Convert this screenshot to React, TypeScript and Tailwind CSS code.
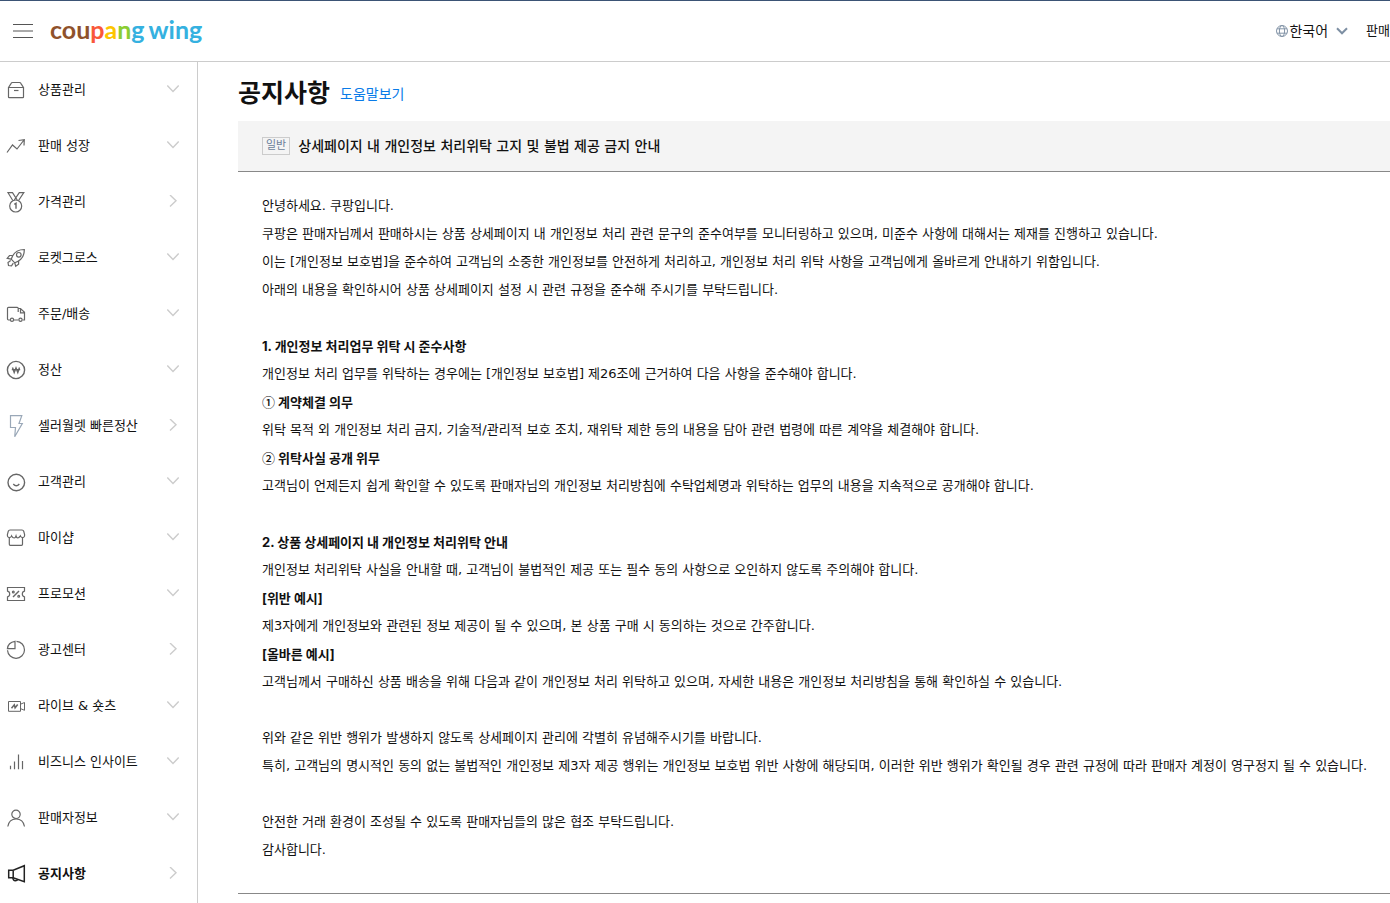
import type { ReactNode } from "react";

interface MenuItem {
  label: string;
  icon: ReactNode;
  arrow: "down" | "right";
  active?: boolean;
}

const MENU: MenuItem[] = [
  {
    label: "상품관리",
    arrow: "down",
    icon: (
      <>
        <path d="M2.500 7.500h15v9.500a.7.7 0 0 1-.7.7H3.200a.7.7 0 0 1-.7-.7zL5 3.600Q5.500 2.500 6.600 2.500h6.800q1.100 0 1.600 1.100l2.500 3.900" />
        <path d="M8 10.500h4.500" />
      </>
    ),
  },
  {
    label: "판매 성장",
    arrow: "down",
    icon: <path d="M1 16.500 6.500 9l4.500 4 7-9M12.500 4.500l5.800-.8-.3 5.800" />,
  },
  {
    label: "가격관리",
    arrow: "right",
    icon: (
      <>
        <circle cx="9.700" cy="14" r="6" />
        <path d="M6.800 8.500 2 .7h4.500l4.700 7.300M12.600 8.500 17.800.7h-4.500l-5 7.300" />
        <path d="M8.300 12.300 10 11.300v5.400" strokeWidth="1.400" />
      </>
    ),
  },
  {
    label: "로켓그로스",
    arrow: "down",
    icon: (
      <>
        <path d="M5.200 11.200C7 5.500 11.500 1.500 18.300 1.500c.2 6.500-3.800 11.200-9.500 13.300z" />
        <circle cx="12.800" cy="6.800" r="2.300" />
        <path d="M6.800 7.500H3.500L1.200 10.300l4 .9M12.600 13v3.200l-2.900 2-1-3.500M4.700 12.500l-2.700 2 .5 3 3 .3 1.800-2.600" />
      </>
    ),
  },
  {
    label: "주문/배송",
    arrow: "down",
    icon: (
      <>
        <path d="M4 16H2.500q-1-.1-1-1V4.300q0-1 1-1h8.700q1 0 1 1V8M8 16h4.500M16.500 16h2V8.300l-4-3.800h-2.300M14.500 4.500v4.300h4" />
        <circle cx="6" cy="15.700" r="1.600" />
        <circle cx="14.500" cy="15.700" r="1.600" />
      </>
    ),
  },
  {
    label: "정산",
    arrow: "down",
    icon: (
      <>
        <circle cx="10" cy="10" r="8.600" strokeWidth="1.400" />
        <path d="m6.500 7.500 1.700 5L10 8l1.800 4.500 1.700-5M5.800 9.600h8.400" strokeWidth="1.400" />
      </>
    ),
  },
  {
    label: "셀러월렛 빠른정산",
    arrow: "right",
    icon: (
      <path
        stroke="#9aa8b8"
        d="M4.500-.3h11.300L13 7.500h3.300L8.700 20.700l.8-9.200h-5z"
      />
    ),
  },
  {
    label: "고객관리",
    arrow: "down",
    icon: (
      <>
        <circle cx="10.300" cy="10.500" r="8.300" strokeWidth="1.400" />
        <path d="M7.300 12q3 3.600 6 0" strokeWidth="1.400" />
      </>
    ),
  },
  {
    label: "마이샵",
    arrow: "down",
    icon: (
      <>
        <path d="M3.300 9.500v6.800q0 1 1 1h11.200q1 0 1-1V9.500" />
        <path d="M4 2h12q1.300 0 1.700 1.200l.9 3.300q.2 3-2 3.100-1.600 0-2.200-1.700Q13 10 11.800 10 10.400 9.800 10 8 9.400 9.800 8.200 10 6.600 10 5.600 7.900 5 9.600 3.400 9.600 1.200 9.500 1.400 6.500l.9-3.300Q2.700 2 4 2z" />
      </>
    ),
  },
  {
    label: "프로모션",
    arrow: "down",
    icon: (
      <>
        <path d="M1.500 3.500h17v3.600Q16.300 7.500 16.300 10t2.200 2.900v3.600h-17v-3.600Q3.700 12.500 3.700 10T1.500 7.100z" />
        <path d="M7 13l6-6" strokeWidth="1.400" />
        <circle cx="7.300" cy="8" r=".9" />
        <circle cx="12.700" cy="12.200" r=".9" />
      </>
    ),
  },
  {
    label: "광고센터",
    arrow: "right",
    icon: (
      <>
        <path d="M10.500 1.300a8.500 8.500 0 1 1-9 9" />
        <path d="M1.400 8.700Q2 2.300 9 1.300v7.400z" />
      </>
    ),
  },
  {
    label: "라이브 & 숏츠",
    arrow: "down",
    icon: (
      <>
        <path d="M2.500 5.500h12v9.800h-12zM14.500 8.200l4-1.700v7.800l-4-1.700" strokeWidth="1" />
        <path d="M5.500 12.300 8.300 8.800l.8 3 2.600-3.300" strokeWidth="1.500" />
      </>
    ),
  },
  {
    label: "비즈니스 인사이트",
    arrow: "down",
    icon: <path d="M4.500 17.300v-3.500M8.500 17.300V9.500M12.500 17.300V2.500M16.500 17.300V9" />,
  },
  {
    label: "판매자정보",
    arrow: "down",
    icon: (
      <>
        <circle cx="10" cy="6.300" r="4.200" />
        <path d="M1.800 18.500Q3 11 10.100 11t8.400 7.500" />
      </>
    ),
  },
  {
    label: "공지사항",
    arrow: "right",
    active: true,
    icon: (
      <>
        <path d="M2.700 6.300h4.500L18.300 1.700v16L7.200 13.700H2.700zM7.200 6.300v7.400" strokeWidth="1.500" />
        <path d="M6.800 13.700q.3 3 2.500 3 2 0 2.500-1.500" strokeWidth="1.500" />
      </>
    ),
  },
];

interface Line {
  text: string;
  bold?: boolean;
  marker?: string;
}

const SECTIONS: Line[][] = [
  [
    { text: "안녕하세요. 쿠팡입니다." },
    { text: "쿠팡은 판매자님께서 판매하시는 상품 상세페이지 내 개인정보 처리 관련 문구의 준수여부를 모니터링하고 있으며, 미준수 사항에 대해서는 제재를 진행하고 있습니다." },
    { text: "이는 [개인정보 보호법]을 준수하여 고객님의 소중한 개인정보를 안전하게 처리하고, 개인정보 처리 위탁 사항을 고객님에게 올바르게 안내하기 위함입니다." },
    { text: "아래의 내용을 확인하시어 상품 상세페이지 설정 시 관련 규정을 준수해 주시기를 부탁드립니다." },
  ],
  [
    { text: "1. 개인정보 처리업무 위탁 시 준수사항", bold: true },
    { text: "개인정보 처리 업무를 위탁하는 경우에는 [개인정보 보호법] 제26조에 근거하여 다음 사항을 준수해야 합니다." },
    { marker: "①", text: "계약체결 의무", bold: true },
    { text: "위탁 목적 외 개인정보 처리 금지, 기술적/관리적 보호 조치, 재위탁 제한 등의 내용을 담아 관련 법령에 따른 계약을 체결해야 합니다." },
    { marker: "②", text: "위탁사실 공개 위무", bold: true },
    { text: "고객님이 언제든지 쉽게 확인할 수 있도록 판매자님의 개인정보 처리방침에 수탁업체명과 위탁하는 업무의 내용을 지속적으로 공개해야 합니다." },
  ],
  [
    { text: "2. 상품 상세페이지 내 개인정보 처리위탁 안내", bold: true },
    { text: "개인정보 처리위탁 사실을 안내할 때, 고객님이 불법적인 제공 또는 필수 동의 사항으로 오인하지 않도록 주의해야 합니다." },
    { text: "[위반 예시]", bold: true },
    { text: "제3자에게 개인정보와 관련된 정보 제공이 될 수 있으며, 본 상품 구매 시 동의하는 것으로 간주합니다." },
    { text: "[올바른 예시]", bold: true },
    { text: "고객님께서 구매하신 상품 배송을 위해 다음과 같이 개인정보 처리 위탁하고 있으며, 자세한 내용은 개인정보 처리방침을 통해 확인하실 수 있습니다." },
  ],
  [
    { text: "위와 같은 위반 행위가 발생하지 않도록 상세페이지 관리에 각별히 유념해주시기를 바랍니다." },
    { text: "특히, 고객님의 명시적인 동의 없는 불법적인 개인정보 제3자 제공 행위는 개인정보 보호법 위반 사항에 해당되며, 이러한 위반 행위가 확인될 경우 관련 규정에 따라 판매자 계정이 영구정지 될 수 있습니다." },
  ],
  [
    { text: "안전한 거래 환경이 조성될 수 있도록 판매자님들의 많은 협조 부탁드립니다." },
    { text: "감사합니다." },
  ],
];

export default function App() {
  return (
    <div className="flex min-h-screen flex-col overflow-x-hidden border-t border-[#3b5475] bg-white font-['DejaVu_Sans','Noto_Sans_CJK_KR',sans-serif] text-[13px] text-[#111]">
      <Header />
      <div className="flex flex-1">
        <Sidebar />
        <Notice />
      </div>
    </div>
  );
}

function Header() {
  return (
    <header className="flex h-[61px] shrink-0 items-center border-b border-[#ccc]">
      <button type="button" aria-label="메뉴" className="ml-3 flex w-[22px] justify-center">
        <svg width="20" height="14" viewBox="0 0 20 14" stroke="#555" fill="none">
          <path d="M0 .5h20M0 7h20M0 13.500h20" />
        </svg>
      </button>
      <a
        href="#"
        className="ml-4 flex gap-1 pb-1 font-['Lato',sans-serif] text-[25px] leading-8 font-bold text-[#35b1e0]"
      >
        <span>
          <span className="text-[#8f522b]">cou</span>
          <span className="text-[#f9583a]">p</span>
          <span className="text-[#fdc500]">a</span>
          <span className="text-[#8bcd32]">n</span>
          <span>g</span>
        </span>
        <span>wing</span>
      </a>
      <div className="ml-auto flex items-center whitespace-nowrap">
        <button type="button" className="flex items-center">
          <svg width="14" height="14" viewBox="0 0 14 14" stroke="#8495a8" fill="none">
            <circle cx="7" cy="7" r="5.500" />
            <ellipse cx="7" cy="7" rx="2.600" ry="5.500" />
            <path d="M2 4.800h10M2 9.200h10" />
          </svg>
          <span className="text-sm">한국어</span>
          <svg className="ml-2" width="12" height="8" viewBox="0 0 12 8" stroke="#7d8fa3" strokeWidth="2" fill="none">
            <path d="m1 1.300 5 5 5-5" />
          </svg>
        </button>
        <a href="#" className="ml-[18px]">판매</a>
      </div>
    </header>
  );
}

function Sidebar() {
  return (
    <nav className="w-[198px] shrink-0 border-r border-[#ccc]">
      <ul>
        {MENU.map((item) => (
          <li key={item.label}>
            <a href="#" className="flex h-14 items-center pr-[18px] pl-1.5">
              <svg
                width="20"
                height="20"
                viewBox="0 0 20 20"
                fill="none"
                stroke={item.active ? "#222" : "#666"}
                strokeWidth="1.200"
                className="shrink-0 overflow-visible"
              >
                {item.icon}
              </svg>
              <span className={item.active ? "ml-3 font-bold" : "ml-3"}>{item.label}</span>
              <Arrow direction={item.arrow} />
            </a>
          </li>
        ))}
      </ul>
    </nav>
  );
}

function Arrow({ direction }: { direction: "down" | "right" }) {
  return (
    <svg className="ml-auto shrink-0" width="12" height="14" viewBox="0 0 12 14" fill="none" stroke="#ccc">
      <path d={direction === "down" ? "m.3 2.500 5.700 6 5.700-6" : "m3 0 6 5.700-6 5.700"} strokeWidth="1.400" />
    </svg>
  );
}

function Notice() {
  return (
    <main className="min-w-0 flex-1 pt-1 pb-[9px] pl-10">
      <div className="flex h-[55px] items-center gap-2.5">
        <h1 className="text-[25px] leading-10 font-bold">공지사항</h1>
        <a href="#" className="text-sm text-[#0a7be8]">도움말보기</a>
      </div>
      <article className="border-b border-[#888]">
        <header className="flex h-[51px] items-center gap-2 border-b border-[#888] bg-[#f4f4f4] px-6">
          <span className="border border-[#ccc] px-[3px] text-[11px] leading-4 text-[#6b7f99]">일반</span>
          <h2 className="text-sm font-medium">상세페이지 내 개인정보 처리위탁 고지 및 불법 제공 금지 안내</h2>
        </header>
        <div className="flex flex-col gap-7 pt-5 pb-[29px] pl-6 leading-7">
          {SECTIONS.map((lines, i) => (
            <section key={i}>
              {lines.map((line) => (
                <p
                  key={line.text}
                  className={line.bold ? "font-['Inter','Noto_Sans_CJK_KR',sans-serif] font-bold" : ""}
                >
                  {line.marker && (
                    <span className="font-['Noto_Sans_CJK_KR',sans-serif] leading-none font-medium">{line.marker}</span>
                  )}
                  {line.marker && " "}
                  {line.text}
                </p>
              ))}
            </section>
          ))}
        </div>
      </article>
    </main>
  );
}
